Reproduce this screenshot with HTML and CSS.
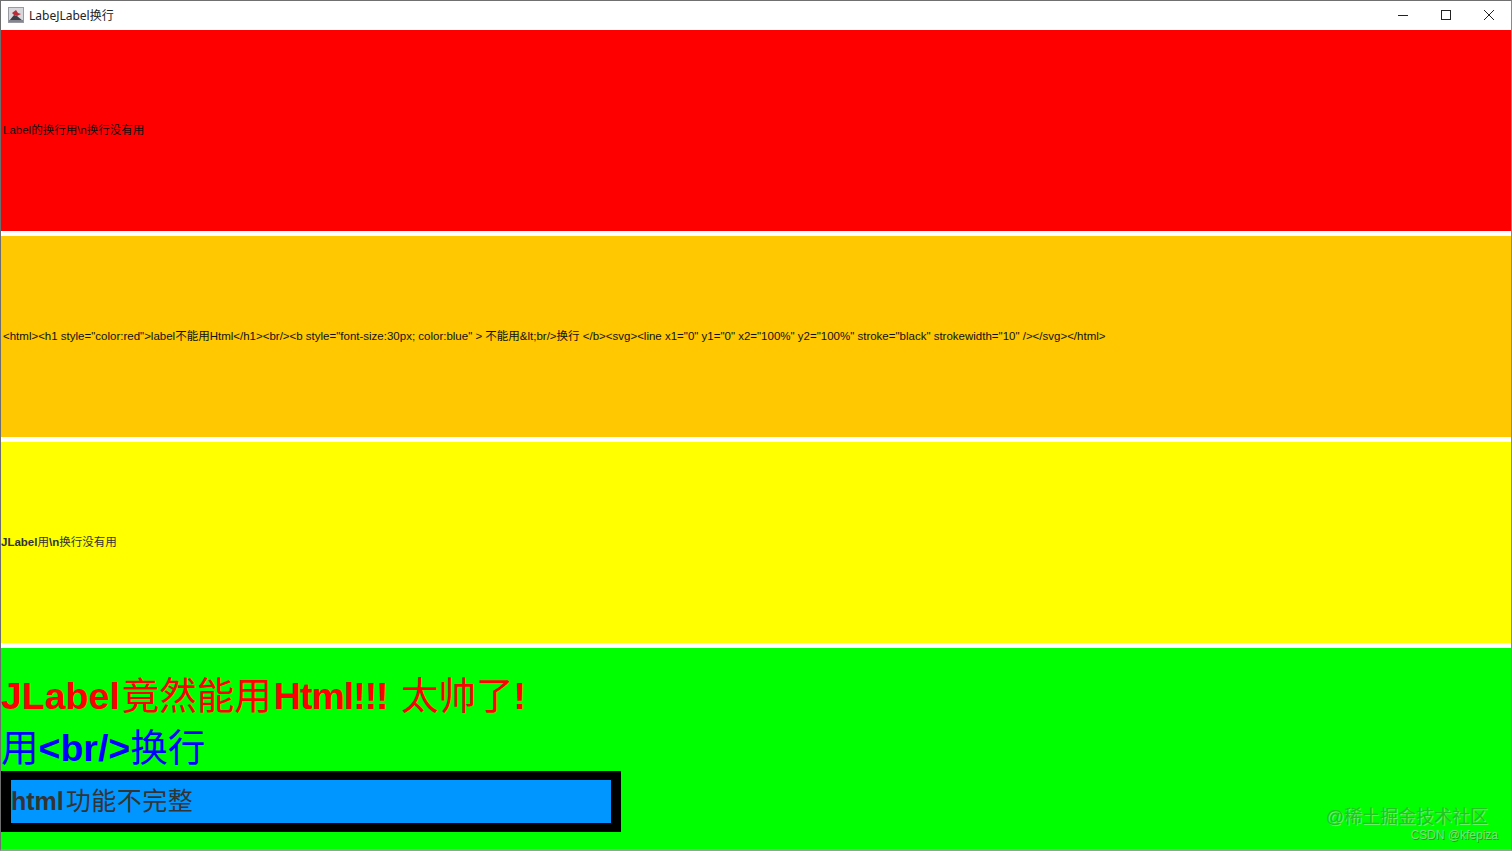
FILE: index.html
```html
<!DOCTYPE html>
<html>
<head>
  <meta charset="utf-8">
  <title>LabeJLabel换行</title>
  <link rel="stylesheet" href="styles.css">
</head>
<body>
  <div class="window">
    <div class="title-bar">
      <div class="title-left">
        <svg class="app-icon" width="16" height="16" viewBox="0 0 16 16">
          <rect x="0.5" y="0.5" width="15" height="15" fill="#d8d8dc" stroke="#9a9aa2"/>
          <path d="M1 14 L6 8 L9 9 L15 14 Z" fill="#3c3c46"/>
          <path d="M8 3 L10 6 L13 7 L9 9 L6 8 L4 6 Z" fill="#b82c3a"/>
          <rect x="1" y="13" width="14" height="2" fill="#85858f"/>
        </svg>
        <span class="title-text">LabeJLabel换行</span>
      </div>
      <div class="window-buttons">
        <svg class="win-btn" width="10" height="10" viewBox="0 0 10 10"><path d="M0 5.5 H10" stroke="#222" fill="none"/></svg>
        <svg class="win-btn" width="10" height="10" viewBox="0 0 10 10"><rect x="0.5" y="0.5" width="9" height="9" stroke="#222" fill="none"/></svg>
        <svg class="win-btn" width="10" height="10" viewBox="0 0 10 10"><path d="M0 0 L10 10 M10 0 L0 10" stroke="#222" fill="none"/></svg>
      </div>
    </div>
    <div class="panels">
      <div class="panel panel-red"><span class="awt-text">Label的换行用\n换行没有用</span></div>
      <div class="panel panel-orange"><span class="awt-text">&lt;html&gt;&lt;h1 style="color:red"&gt;label不能用Html&lt;/h1&gt;&lt;br/&gt;&lt;b style="font-size:30px; color:blue" &gt; 不能用&amp;lt;br/&gt;换行 &lt;/b&gt;&lt;svg&gt;&lt;line x1="0" y1="0" x2="100%" y2="100%" stroke="black" strokewidth="10" /&gt;&lt;/svg&gt;&lt;/html&gt;</span></div>
      <div class="panel panel-yellow"><span class="swing-text"><b>JLabel</b>用<b>\n</b>换行没有用</span></div>
      <div class="panel panel-green">
        <div class="html-label">
          <div class="big-line red-line"><b class="gap-after">JLabel</b>竟然能用<b class="tight">Html!!!</b> <span class="gap-before">太帅了</span><b>!</b></div>
          <div class="big-line blue-line">用<b>&lt;br/&gt;</b>换行</div>
          <div class="note-box"><div class="note-inner"><b>html</b><span class="note-cjk">功能不完整</span></div></div>
        </div>
      </div>
    </div>
  </div>
  <div class="watermark">
    <div class="wm-main">@稀土掘金技术社区</div>
    <div class="wm-sub">CSDN @kfepiza</div>
  </div>
</body>
</html>
```

FILE: styles.css
```css
html, body {
  margin: 0;
  padding: 0;
  width: 1512px;
  height: 851px;
  overflow: hidden;
  background: #ffffff;
  font-family: "Liberation Sans", "Noto Sans CJK SC", sans-serif;
}

.window {
  width: 1510px;
  height: 848px;
  border-top: 1px solid #707070;
  border-left: 1px solid #6e6e6e;
  border-right: 1px solid #8a8a8a;
  border-bottom: 2px solid #9aa09a;
  display: flex;
  flex-direction: column;
}

/* Title bar */
.title-bar {
  height: 29px;
  flex: none;
  display: flex;
  align-items: center;
  justify-content: space-between;
  background: #ffffff;
}

.title-left {
  display: flex;
  align-items: center;
  padding-left: 7px;
  gap: 5px;
  margin-top: -2px;
}

.title-text {
  font-family: "Noto Sans", "Noto Sans CJK SC", sans-serif;
  font-size: 12px;
  color: #222;
}

.window-buttons {
  display: flex;
  align-items: center;
  gap: 33px;
  padding-right: 17px;
  margin-top: -1px;
}

.win-btn {
  display: block;
}

/* Four stacked labels */
.panels {
  flex: 1;
  display: grid;
  grid-template-rows: repeat(4, 201px);
  row-gap: 5px;
  align-content: start;
}

.panel {
  display: flex;
  align-items: center;
  overflow: hidden;
  white-space: nowrap;
}

.panel-red { background: #ff0000; }
.panel-orange { background: #ffc800; }
.panel-yellow { background: #ffff00; }
.panel-green { background: #00ff00; }

.awt-text {
  padding-left: 2px;
  margin-top: -3px;
  font-size: 11.5px;
  color: #111;
}

.swing-text {
  margin-top: -3px;
  font-size: 11.5px;
  color: #333;
}

/* Html label in the green panel */
.html-label {
  align-self: flex-start;
  padding-top: 22px;
}

.big-line {
  font-size: 37.5px;
  line-height: 52px;
}

.red-line { color: #ff0000; }
.blue-line { color: #0000ff; }

.gap-after { margin-right: 2px; }
.tight { margin-left: 2px; letter-spacing: -1px; }
.gap-before { margin-left: 3px; }

.note-box {
  width: 600px;
  margin-top: -3px;
  padding: 9px 10px;
  background: #000000;
}

.note-inner {
  height: 43px;
  line-height: 43px;
  background: #0096ff;
  color: #333;
  font-size: 25px;
}

.note-cjk {
  margin-left: 2px;
  letter-spacing: 0.5px;
}

/* Watermark */
.watermark {
  position: absolute;
  right: 14px;
  bottom: 9px;
  text-align: right;
}

.wm-main {
  font-size: 18px;
  line-height: 24px;
  margin-right: 10px;
  margin-bottom: -1px;
  color: #22c522;
  text-shadow: 1px 1px 0 #6cf06c;
}

.wm-sub {
  font-size: 12px;
  line-height: 14px;
  color: #7fe07f;
  text-shadow: 1px 1px 0 #10b010;
}
```
